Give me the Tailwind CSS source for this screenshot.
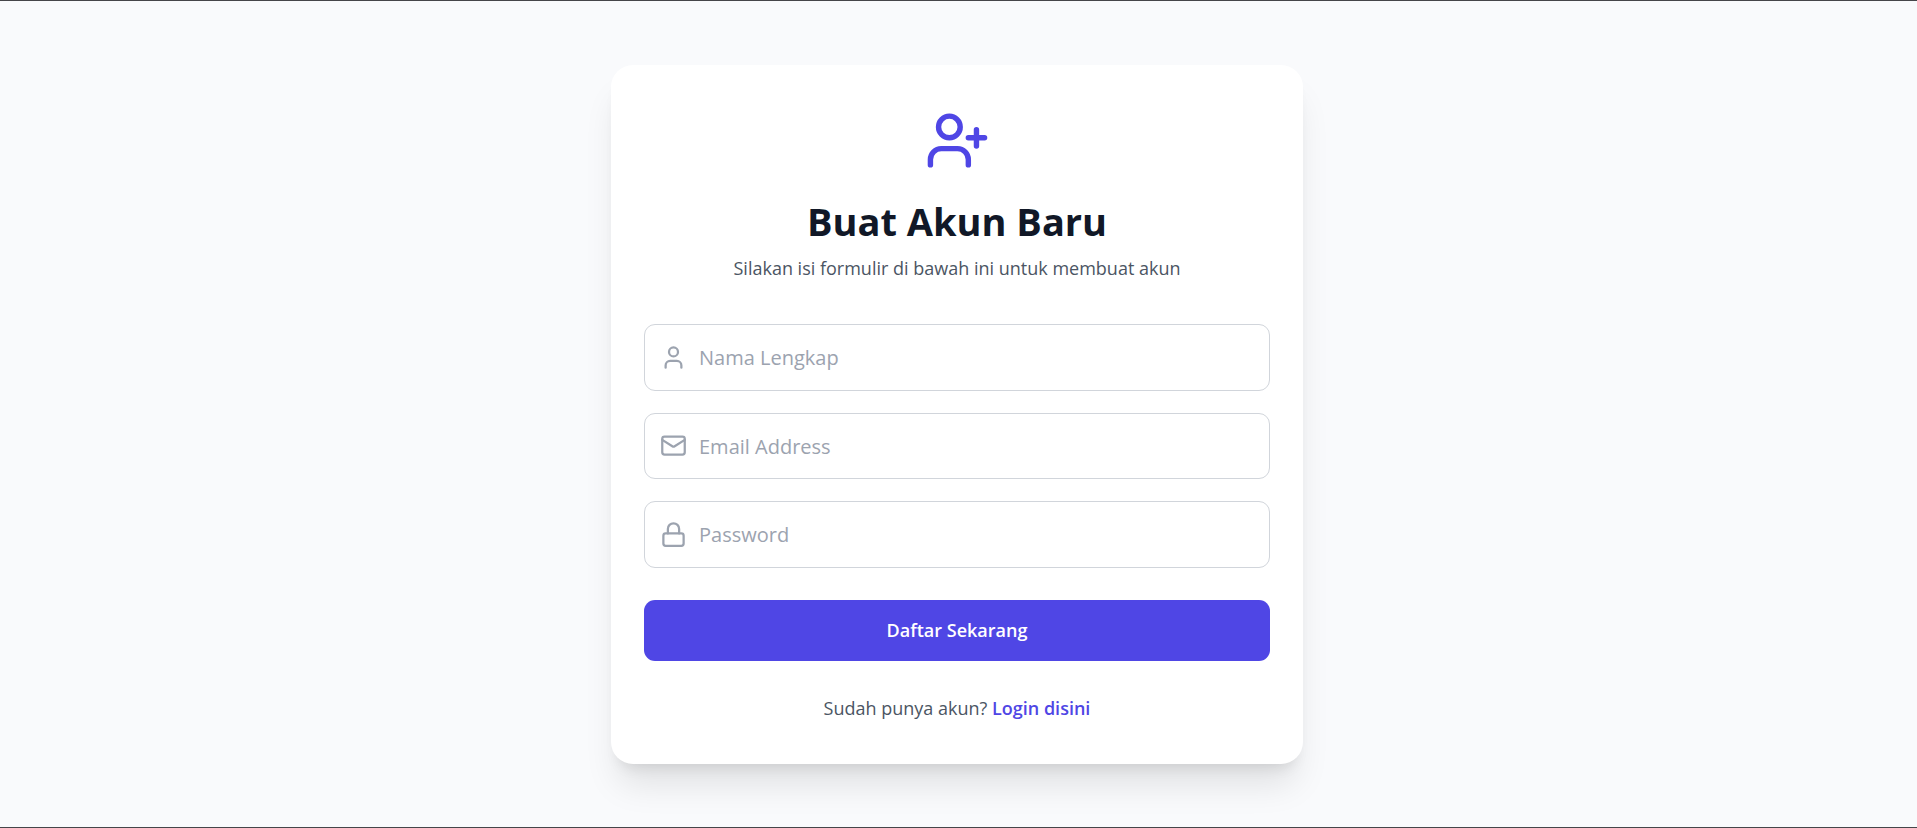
<!DOCTYPE html>
<html lang="id">
<head>
<meta charset="utf-8">
<meta name="viewport" content="width=device-width, initial-scale=1">
<title>Buat Akun Baru</title>
<script src="https://cdn.jsdelivr.net/npm/@tailwindcss/browser@4"></script>
</head>
<body class="flex min-h-screen items-center justify-center border-y border-[#454549] bg-[#f9fafc] py-8 pr-[3px] font-['Segoe_UI','Open_Sans',sans-serif] text-lg text-[#4b5563]">
<main class="w-full max-w-[692px] rounded-[22px] bg-white px-[33px] pt-[43px] pb-[42px] shadow-[0_27px_34px_-7px_rgb(0_0_0/0.1),0_11px_14px_-8px_rgb(0_0_0/0.1)]">
  <header class="flex flex-col items-center text-center">
    <svg class="size-[65px] text-[#4f46e5]" viewBox="0 0 24 24" fill="none" stroke="currentColor" stroke-width="2" stroke-linecap="round" stroke-linejoin="round" aria-hidden="true"><path d="M16 21v-2a4 4 0 0 0-4-4H6a4 4 0 0 0-4 4v2"/><circle cx="9" cy="7" r="4"/><path d="M19 8v6M22 11h-6"/></svg>
    <h1 class="mt-6 text-[38px] leading-[48px] font-bold text-[#111827]">Buat Akun Baru</h1>
    <p class="mt-[9px] leading-7">Silakan isi formulir di bawah ini untuk membuat akun</p>
  </header>
  <form class="mt-[42px]">
    <div class="flex flex-col gap-[22px]">
      <label class="flex h-[67px] items-center gap-3 rounded-[11px] border border-[#d1d5db] px-[15px] text-[#9ca3af]">
        <svg class="size-[27px] shrink-0" viewBox="0 0 24 24" fill="none" stroke="currentColor" stroke-width="2" stroke-linecap="round" stroke-linejoin="round" aria-hidden="true"><path d="M19 21v-2a4 4 0 0 0-4-4H9a4 4 0 0 0-4 4v2"/><circle cx="12" cy="7" r="4"/></svg>
        <input type="text" aria-label="Nama Lengkap" placeholder="Nama Lengkap" class="w-full min-w-0 bg-transparent pt-0.5 text-xl text-[#111827] outline-none placeholder:text-[#9ca3af]">
      </label>
      <label class="flex h-[66px] items-center gap-3 rounded-[11px] border border-[#d1d5db] px-[15px] text-[#9ca3af]">
        <svg class="size-[27px] shrink-0" viewBox="0 0 24 24" fill="none" stroke="currentColor" stroke-width="2" stroke-linecap="round" stroke-linejoin="round" aria-hidden="true"><rect x="2" y="4" width="20" height="16" rx="2"/><path d="m22 7-8.97 5.7a1.94 1.94 0 0 1-2.06 0L2 7"/></svg>
        <input type="email" aria-label="Email Address" placeholder="Email Address" class="w-full min-w-0 bg-transparent pt-0.5 text-xl text-[#111827] outline-none placeholder:text-[#9ca3af]">
      </label>
      <label class="flex h-[67px] items-center gap-3 rounded-[11px] border border-[#d1d5db] px-[15px] text-[#9ca3af]">
        <svg class="size-[27px] shrink-0" viewBox="0 0 24 24" fill="none" stroke="currentColor" stroke-width="2" stroke-linecap="round" stroke-linejoin="round" aria-hidden="true"><rect x="3" y="11" width="18" height="11" rx="2"/><path d="M7 11V7a5 5 0 0 1 10 0v4"/></svg>
        <input type="password" aria-label="Password" placeholder="Password" class="w-full min-w-0 bg-transparent pt-0.5 text-xl text-[#111827] outline-none placeholder:text-[#9ca3af]">
      </label>
    </div>
    <button type="submit" class="mt-8 h-[61px] w-full rounded-[11px] bg-[#4f46e5] font-semibold text-white">Daftar Sekarang</button>
  </form>
  <p class="mt-[33px] text-center leading-7">Sudah punya akun? <a href="#" class="font-semibold text-[#4f46e5]">Login disini</a></p>
</main>
</body>
</html>
